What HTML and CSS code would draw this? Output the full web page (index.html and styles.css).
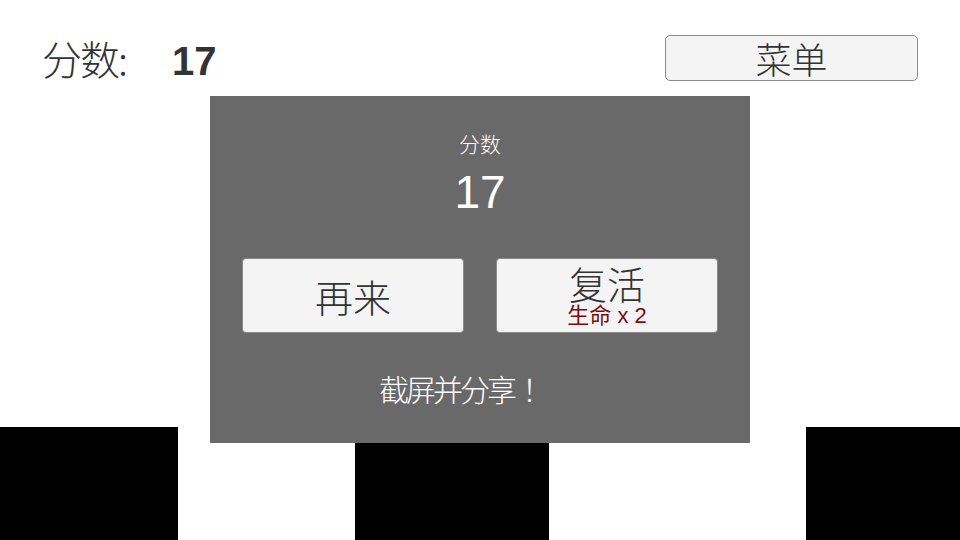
FILE: index.html
```html
<!DOCTYPE html>
<html lang="zh">
<head>
<meta charset="utf-8">
<link rel="stylesheet" href="styles.css">
</head>
<body>
<div class="screen">
  <header class="topbar">
    <div class="score">
      <span class="score-label">分数:</span>
      <span class="score-value">17</span>
    </div>
    <button class="menu-btn">菜单</button>
  </header>
  <div class="ground">
    <div class="block b1"></div>
    <div class="block b2"></div>
    <div class="block b3"></div>
  </div>
  <div class="dialog">
    <div class="dlg-label">分数</div>
    <div class="dlg-score">17</div>
    <div class="dlg-buttons">
      <button class="btn"><span class="btn-main">再来</span></button>
      <button class="btn btn-revive"><span class="btn-main">复活</span><span class="btn-sub">生命 x 2</span></button>
    </div>
    <div class="share">截屏并分享<span class="bang">！</span></div>
  </div>
</div>
</body>
</html>
```
FILE: styles.css
```css
html, body {
  margin: 0;
  padding: 0;
  background: #fff;
}
body {
  font-family: "Liberation Sans", "Noto Sans CJK SC", sans-serif;
  color: #333;
}
.screen {
  position: relative;
  width: 960px;
  height: 540px;
  overflow: hidden;
  display: flex;
  flex-direction: column;
  justify-content: space-between;
}
.topbar {
  display: flex;
  justify-content: space-between;
  align-items: flex-start;
  padding: 35px 42px 0 42px;
  height: 61px;
}
.score {
  display: flex;
  align-items: baseline;
}
.score-label {
  font-family: "Noto Sans CJK SC", sans-serif;
  font-weight: 300;
  font-size: 40px;
  line-height: 46px;
  letter-spacing: -2px;
  color: #333;
}
.score-value {
  font-family: "Liberation Sans", sans-serif;
  font-weight: bold;
  font-size: 40px;
  margin-left: 46px;
  color: #333;
}
.menu-btn {
  width: 253px;
  height: 46px;
  box-sizing: border-box;
  background: #f4f4f4;
  border: 1px solid #8c8c8c;
  border-radius: 5px;
  font-family: "Noto Sans CJK SC", sans-serif;
  font-weight: 300;
  font-size: 36px;
  line-height: 40px;
  color: #333;
  padding: 0;
}
.ground {
  display: flex;
  height: 113px;
}
.block {
  background: #000;
  height: 113px;
}
.b1 { width: 178px; }
.b2 { width: 194px; margin-left: 177px; }
.b3 { width: 154px; margin-left: 257px; }
.dialog {
  position: absolute;
  left: 210px;
  top: 96px;
  width: 540px;
  height: 347px;
  background: #696969;
  display: flex;
  flex-direction: column;
  align-items: center;
  color: #fff;
}
.dlg-label {
  font-family: "Noto Sans CJK SC", sans-serif;
  font-weight: 300;
  font-size: 21px;
  line-height: 28px;
  margin-top: 33px;
}
.dlg-score {
  font-family: "Liberation Sans", sans-serif;
  font-size: 46px;
  line-height: 52px;
  margin-top: 9px;
}
.dlg-buttons {
  display: flex;
  gap: 32px;
  margin-top: 40px;
}
.btn {
  width: 222px;
  height: 75px;
  box-sizing: border-box;
  background: #f4f4f4;
  border: 1px solid #8c8c8c;
  border-radius: 4px;
  padding: 0;
  display: flex;
  flex-direction: column;
  align-items: center;
  justify-content: center;
  font-family: "Noto Sans CJK SC", sans-serif;
  font-weight: 300;
  color: #333;
}
.btn-main {
  font-size: 38px;
  line-height: 44px;
}
.btn-revive {
  justify-content: flex-start;
  padding-top: 4px;
}
.btn-revive .btn-main {
  line-height: 40px;
}
.btn-sub {
  font-family: "Liberation Sans", "Noto Sans CJK SC", sans-serif;
  font-weight: normal;
  font-size: 22px;
  line-height: 22px;
  margin-top: 2px;
  color: #7a0c0c;
}
.share {
  font-family: "Noto Sans CJK SC", sans-serif;
  font-weight: 300;
  font-size: 30px;
  line-height: 34px;
  letter-spacing: -3px;
  margin-top: 38px;
  margin-right: 32px;
}
.bang {
  display: inline-block;
  margin-left: 8px;
}
```
